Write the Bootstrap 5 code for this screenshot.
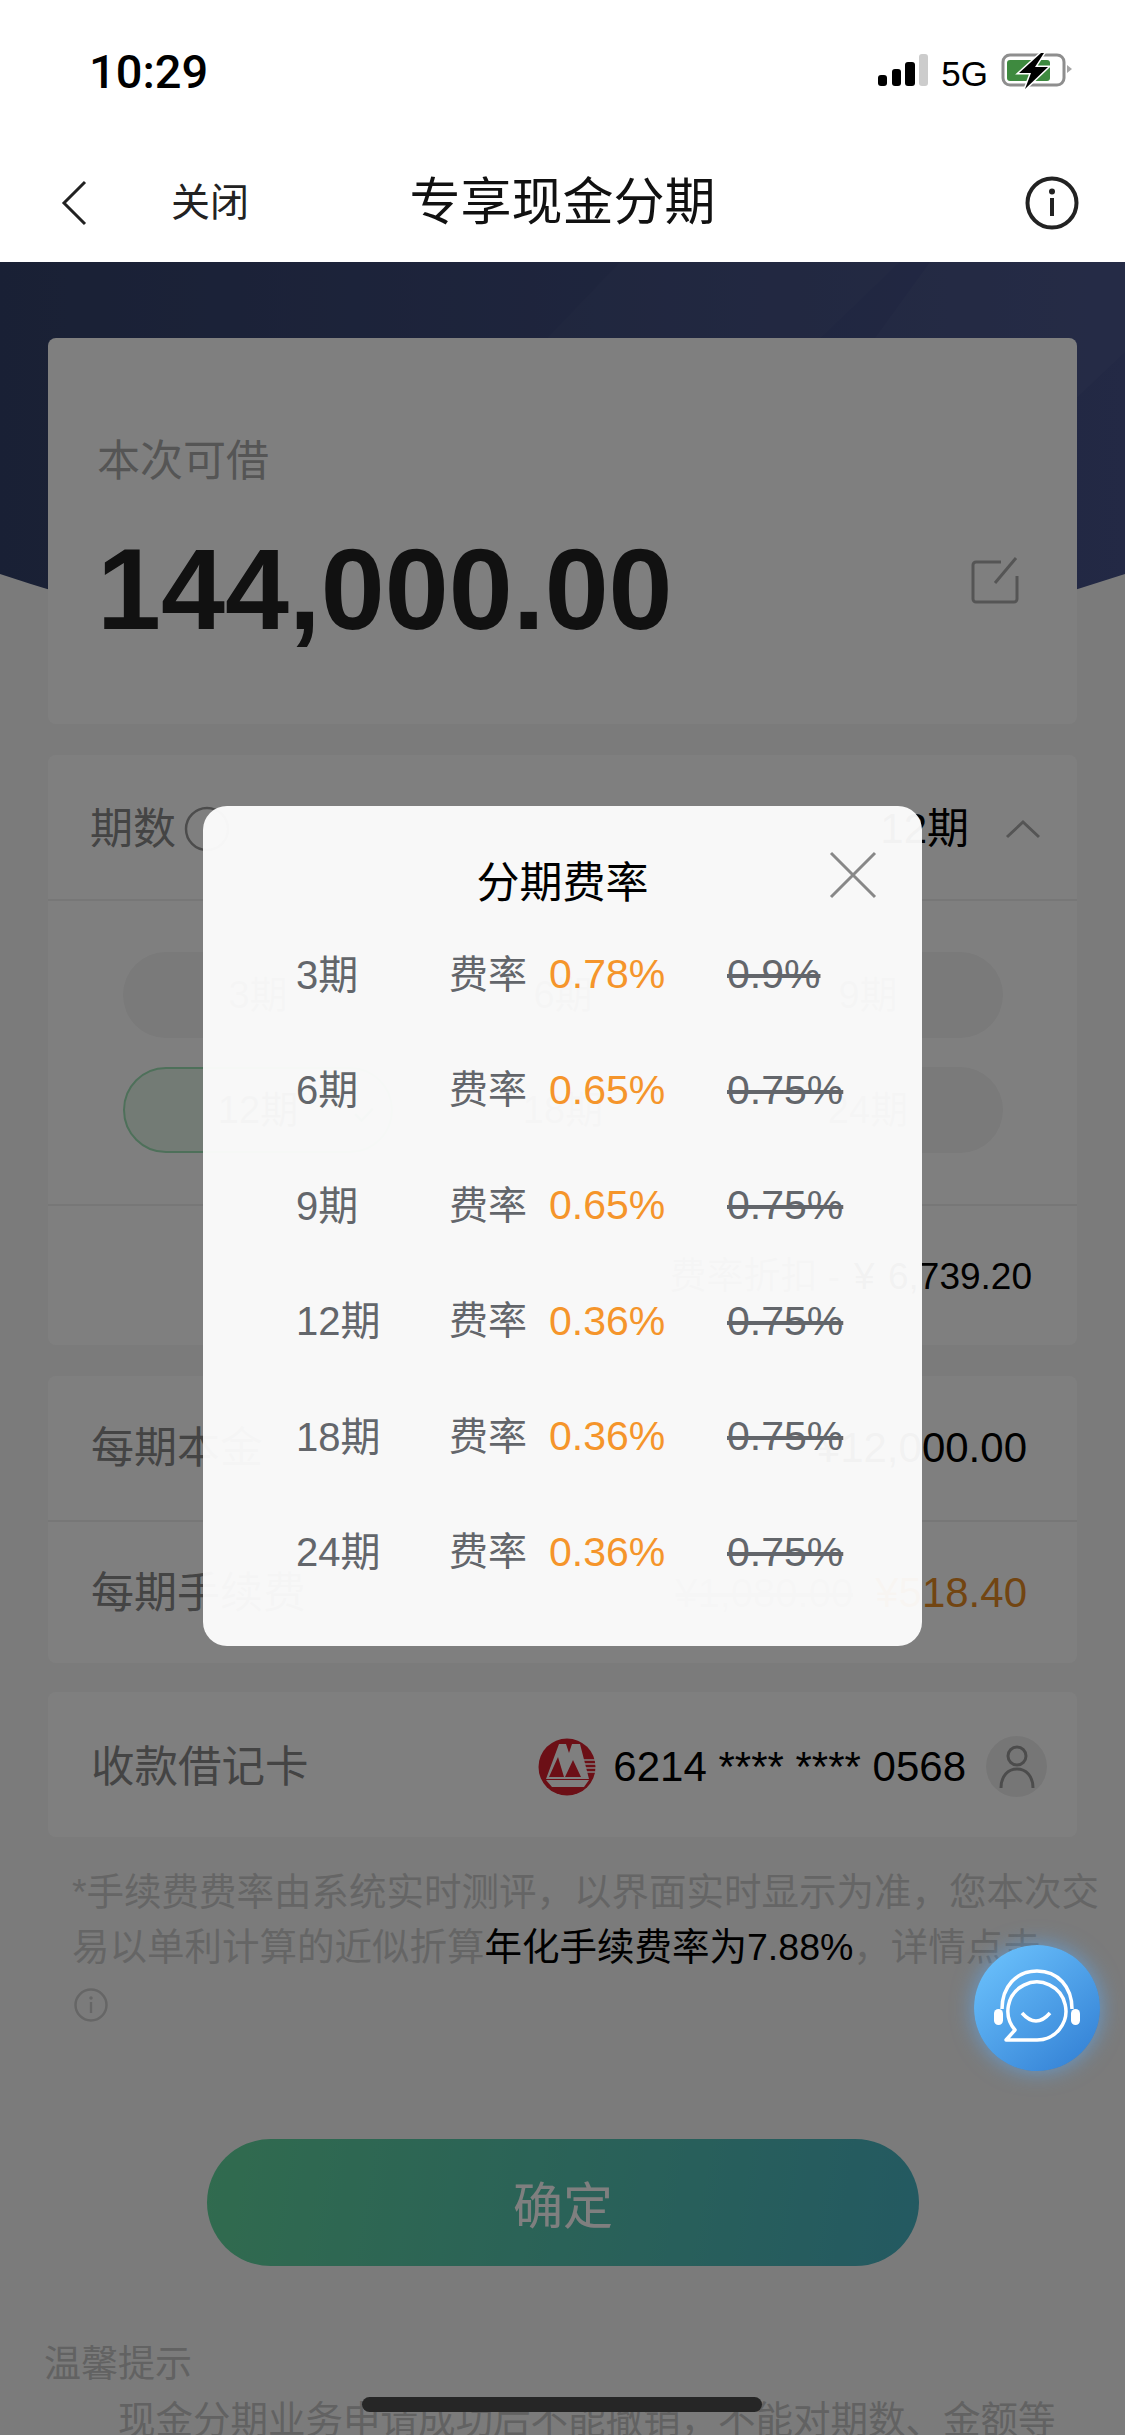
<!DOCTYPE html>
<html lang="zh">
  <head>
    <meta charset="UTF-8" />
    <meta name="viewport" content="width=device-width, initial-scale=1.0" />
    <title>专享现金分期</title>
    <link href="https://cdn.jsdelivr.net/npm/bootstrap@5.3.0/dist/css/bootstrap.min.css" rel="stylesheet" />
    <style>
      body {
        height: 2435px;
        overflow: hidden;
        font-family: "Liberation Sans", "Noto Sans CJK SC", sans-serif;
        background: #fff;
        color: #000;
      }
      .status-bar { height: 100px; padding: 0 52px 0 89px; }
      .status-time { font-family: Roboto, sans-serif; font-weight: 500; font-size: 47px; line-height: 1; padding-top: 48px; }
      .status-icons { padding-top: 34px; gap: 13px; }
      .status-5g { font-size: 35px; line-height: 1; padding-top: 22px; }
      .top-nav { height: 162px; padding: 44px 46px 0 61px; }
      .nav-close { font-size: 39px; line-height: 50px; margin-left: 84px; color: #222; }
      .nav-title { left: 0; right: 0; top: 78px; font-size: 51px; line-height: 50px; color: #111; }

      .page-main { height: 2173px; background: #f7f7f7; padding: 76px 48px 0; overflow: hidden; }
      .hero-bg { left: 0; top: 0; width: 1125px; height: 500px; }
      .page-sections { z-index: 1; }
      .sheet { background: #fff; border-radius: 8px; }
      .borrow-sheet { height: 386px; padding: 95px 58px 0 49px; margin-bottom: 31px; }
      .borrow-label { font-size: 43px; line-height: 56px; color: #ababab; }
      .borrow-amount { font-size: 115px; line-height: 114px; font-weight: 700; color: #222; margin-top: 43px; }
      .edit-icon { margin-top: 124px; }

      .term-sheet { height: 590px; margin-bottom: 31px; }
      .term-head { height: 146px; padding: 3px 36px 0 42px; border-bottom: 2px solid #efefef; }
      .row-label { font-size: 43px; line-height: 56px; color: #888; }
      .row-value { font-size: 42px; line-height: 56px; color: #000; }
      .term-pills { padding: 51px 74px 51px 75px; gap: 29px 35px; border-bottom: 2px solid #efefef; }
      .term-pill { width: 270px; height: 86px; border-radius: 43px; background: #f4f4f4; font-size: 38px; color: #888; }
      .term-pill.picked { background: #e6f6ea; border: 2px solid #9ce0b4; color: #666; }
      .pick-check { left: 228px; top: 38px; }
      .discount-row { height: 142px; padding: 0 45px 0 42px; font-size: 37px; color: #888; }
      .discount-row b { font-weight: 400; color: #000; margin-left: 14px; word-spacing: 3px; }

      .fee-sheet { height: 287px; margin-bottom: 29px; }
      .fee-row { height: 144px; padding: 0 50px 0 43px; }
      .fee-row + .fee-row { height: 143px; border-top: 2px solid #efefef; }
      .old-fee { font-size: 40px; color: #aaa; text-decoration: line-through; margin-right: 22px; }
      .fee-now { color: #e58a25; }

      .card-sheet { height: 145px; padding: 4px 30px 0 43px; }
      .card-sheet .row-label { font-size: 43.5px; }
      .bank-num { font-size: 42px; line-height: 56px; margin-left: 17px; margin-right: 20px; }
      .person-dot { width: 61px; height: 61px; border-radius: 50%; background: #ededed; }

      .foot-note { margin: 28px 0 0 24px; width: 1040px; font-size: 37.5px; line-height: 55px; color: #cbcbcb; }
      .foot-note strong { font-weight: 400; color: #000; }
      .foot-note svg { display: block; margin: 13px 0 0 2px; }
      .confirm-btn {
        display: block;
        width: 712px;
        height: 127px;
        margin: 117px 0 0 159px;
        padding-top: 10px;
        border: 0;
        border-radius: 64px;
        background: linear-gradient(100deg, #62d69d, #48b3c3);
        color: #fff;
        font-size: 50px;
      }
      .tips-head { margin: 74px 0 0 -4px; font-size: 37px; line-height: 50px; color: #c4c4c4; }
      .tips-body { margin: 5px 0 0 70px; width: 960px; font-size: 37.5px; line-height: 50px; color: #c4c4c4; white-space: nowrap; }

      .dim-layer { inset: 0; background: rgba(0, 0, 0, .5); z-index: 2; }
      .rate-modal {
        left: 203px;
        top: 544px;
        width: 719px;
        height: 840px;
        z-index: 3;
        border-radius: 24px;
        background: rgba(255, 255, 255, .95);
        padding-top: 52px;
      }
      .rate-title { font-size: 43px; line-height: 50px; margin-bottom: 9px; }
      .rate-close { right: 44px; top: 44px; }
      .rate-row { height: 115.5px; padding-left: 93px; font-size: 41px; color: #63666b; }
      .rate-term { width: 153px; font-size: 40px; }
      .rate-word { width: 100px; font-size: 39px; }
      .rate-now { width: 178px; color: #f5952b; }
      .chat-bubble {
        left: 974px;
        top: 1683px;
        width: 126px;
        height: 126px;
        z-index: 4;
        border-radius: 50%;
        background: linear-gradient(140deg, #6fc6ff, #2f7cd2);
        box-shadow: 0 0 22px rgba(90, 175, 255, .65);
      }
      .home-bar { left: 362px; top: 2135px; width: 400px; height: 15px; border-radius: 8px; background: #262626; z-index: 4; }
    </style>
  </head>
  <body>
    <div class="status-bar d-flex justify-content-between">
      <div class="status-time">10:29</div>
      <div class="status-icons d-flex align-items-start">
        <svg width="50" height="60" viewBox="0 0 50 60">
          <rect x="0" y="41" width="9" height="11" rx="3" fill="#000" />
          <rect x="14" y="35" width="9" height="17" rx="3" fill="#000" />
          <rect x="27" y="28" width="10" height="24" rx="3" fill="#000" />
          <rect x="41" y="20" width="9" height="32" rx="3" fill="#ccc" />
        </svg>
        <div class="status-5g">5G</div>
        <svg width="72" height="60" viewBox="0 0 72 60">
          <rect x="2" y="21" width="61" height="30" rx="7" fill="none" stroke="#8e8e8e" stroke-width="3" />
          <rect x="6" y="26" width="43" height="21" rx="3" fill="#3e8a3f" />
          <path d="M66 31l5 4-5 4z" fill="#a5a5a5" />
          <path d="M40 19L18 39h12l-6 16 23-22H34l9-14z" fill="#000" stroke="#fff" stroke-width="3" paint-order="stroke" />
        </svg>
      </div>
    </div>

    <div class="top-nav position-relative d-flex align-items-center">
      <svg width="26" height="46" viewBox="0 0 26 46"><path d="M24 2L3 23l21 21" fill="none" stroke="#222" stroke-width="3" /></svg>
      <div class="nav-close">关闭</div>
      <div class="nav-title position-absolute text-center">专享现金分期</div>
      <svg class="ms-auto" width="54" height="54" viewBox="0 0 54 54">
        <circle cx="27" cy="27" r="24.5" fill="none" stroke="#222" stroke-width="4" />
        <circle cx="27" cy="15.5" r="3" fill="#222" />
        <rect x="25" y="22" width="4" height="18" fill="#222" />
      </svg>
    </div>

    <div class="page-main position-relative">
      <svg class="hero-bg position-absolute" viewBox="0 0 1125 500">
        <defs>
          <linearGradient id="heroFill" x1="0" y1="0" x2="1" y2="0">
            <stop offset="0" stop-color="#33416a" />
            <stop offset="1" stop-color="#46528a" />
          </linearGradient>
        </defs>
        <path d="M0 0H1125V312Q562 500 0 312Z" fill="url(#heroFill)" />
        <path d="M620 0H900L660 230H400Z" fill="#fff" opacity=".025" />
        <path d="M930 0H1125V90L1030 180H800Z" fill="#fff" opacity=".03" />
      </svg>

      <div class="page-sections position-relative">
        <div class="sheet borrow-sheet d-flex justify-content-between">
          <div>
            <div class="borrow-label">本次可借</div>
            <div class="borrow-amount">144,000.00</div>
          </div>
          <svg class="edit-icon" width="48" height="48" viewBox="0 0 48 48">
            <path d="M30 6H5a3 3 0 0 0-3 3v34a3 3 0 0 0 3 3h38a3 3 0 0 0 3-3V20" fill="none" stroke="#aaa" stroke-width="3" transform="translate(0 -1)" />
            <path d="M24 26L45 1" fill="none" stroke="#aaa" stroke-width="3" />
          </svg>
        </div>

        <div class="sheet term-sheet">
          <div class="term-head d-flex align-items-center">
            <span class="row-label">期数</span>
            <svg class="ms-2" width="46" height="46" viewBox="0 0 46 46"><circle cx="23" cy="23" r="21" fill="none" stroke="#999" stroke-width="2.5" /></svg>
            <span class="row-value ms-auto">12期</span>
            <svg style="margin-left:36px" width="36" height="20" viewBox="0 0 36 20"><path d="M2 18L18 3l16 15" fill="none" stroke="#aaa" stroke-width="3" /></svg>
          </div>
          <div class="term-pills d-flex flex-wrap">
            <div class="term-pill d-flex align-items-center justify-content-center">3期</div>
            <div class="term-pill d-flex align-items-center justify-content-center">6期</div>
            <div class="term-pill d-flex align-items-center justify-content-center">9期</div>
            <div class="term-pill picked position-relative d-flex align-items-center justify-content-center">12期
              <svg class="pick-check position-absolute" width="22" height="16" viewBox="0 0 26 20"><path d="M2 9l8 8L24 2" fill="none" stroke="#7fcf9c" stroke-width="3" /></svg>
            </div>
            <div class="term-pill d-flex align-items-center justify-content-center">18期</div>
            <div class="term-pill d-flex align-items-center justify-content-center">24期</div>
          </div>
          <div class="discount-row d-flex align-items-center justify-content-end">费率折扣 -<b>¥ 6,739.20</b></div>
        </div>

        <div class="sheet fee-sheet">
          <div class="fee-row d-flex align-items-center justify-content-between">
            <span class="row-label">每期本金</span>
            <span class="row-value">¥12,000.00</span>
          </div>
          <div class="fee-row d-flex align-items-center justify-content-between">
            <span class="row-label">每期手续费</span>
            <span class="d-flex align-items-center"><span class="old-fee">¥1,080.00</span><span class="row-value fee-now">¥518.40</span></span>
          </div>
        </div>

        <div class="sheet card-sheet d-flex align-items-center">
          <span class="row-label me-auto">收款借记卡</span>
          <svg width="58" height="58" viewBox="0 0 58 58">
            <circle cx="29" cy="29" r="28.5" fill="#d81e2c" />
            <path d="M8 41L21 6h7l3 9 3-9h8l9 35z" fill="#fff" />
            <path d="M11 39l9-20 6 20zM27 39l8-17 8 17z" fill="#d81e2c" />
            <path d="M8 42h43l-5 7H14z" fill="#fff" />
            <path d="M44 22h13M45 26h13M46 30h12M47 34h10" stroke="#fff" stroke-width="1.5" />
          </svg>
          <span class="bank-num">6214 **** **** 0568</span>
          <span class="person-dot d-flex align-items-center justify-content-center">
            <svg width="36" height="44" viewBox="0 0 36 44">
              <circle cx="18" cy="11" r="9" fill="none" stroke="#999" stroke-width="3" />
              <path d="M2 43c0-12 7-19 16-19s16 7 16 19" fill="none" stroke="#999" stroke-width="3" />
            </svg>
          </span>
        </div>

        <div class="foot-note">
          *手续费费率由系统实时测评，以界面实时显示为准，您本次交易以单利计算的近似折算<strong>年化手续费率为7.88%</strong>，详情点击
          <svg width="34" height="34" viewBox="0 0 34 34">
            <circle cx="17" cy="17" r="15.5" fill="none" stroke="#ccc" stroke-width="2.5" />
            <circle cx="17" cy="10" r="1.8" fill="#ccc" />
            <rect x="15.8" y="14" width="2.4" height="11" fill="#ccc" />
          </svg>
        </div>

        <button type="button" class="confirm-btn">确定</button>

        <div class="tips-head">温馨提示</div>
        <div class="tips-body">现金分期业务申请成功后不能撤销，不能对期数、金额等</div>
      </div>

      <div class="dim-layer position-absolute"></div>

      <div class="rate-modal position-absolute">
        <div class="rate-title text-center">分期费率</div>
        <svg class="rate-close position-absolute" width="50" height="50" viewBox="0 0 50 50">
          <path d="M3 3l44 44M47 3L3 47" stroke="#888" stroke-width="3" />
        </svg>
        <div class="rate-row d-flex align-items-center"><span class="rate-term">3期</span><span class="rate-word">费率</span><span class="rate-now">0.78%</span><span class="text-decoration-line-through">0.9%</span></div>
        <div class="rate-row d-flex align-items-center"><span class="rate-term">6期</span><span class="rate-word">费率</span><span class="rate-now">0.65%</span><span class="text-decoration-line-through">0.75%</span></div>
        <div class="rate-row d-flex align-items-center"><span class="rate-term">9期</span><span class="rate-word">费率</span><span class="rate-now">0.65%</span><span class="text-decoration-line-through">0.75%</span></div>
        <div class="rate-row d-flex align-items-center"><span class="rate-term">12期</span><span class="rate-word">费率</span><span class="rate-now">0.36%</span><span class="text-decoration-line-through">0.75%</span></div>
        <div class="rate-row d-flex align-items-center"><span class="rate-term">18期</span><span class="rate-word">费率</span><span class="rate-now">0.36%</span><span class="text-decoration-line-through">0.75%</span></div>
        <div class="rate-row d-flex align-items-center"><span class="rate-term">24期</span><span class="rate-word">费率</span><span class="rate-now">0.36%</span><span class="text-decoration-line-through">0.75%</span></div>
      </div>

      <div class="chat-bubble position-absolute">
        <svg width="126" height="126" viewBox="0 0 126 126" fill="none" stroke="#fff" stroke-width="3.5">
          <path d="M28 64C28 42 42 26 63 26s35 16 35 38" />
          <rect x="20" y="64" width="9" height="16" rx="4.5" fill="#fff" stroke="none" />
          <rect x="97" y="64" width="9" height="16" rx="4.5" fill="#fff" stroke="none" />
          <path d="M41 85A29 29 0 1 1 62 95H32z" stroke-linejoin="round" />
          <path d="M48 68Q62 84 76 68" />
        </svg>
      </div>

      <div class="home-bar position-absolute"></div>
    </div>

    <script src="https://cdn.jsdelivr.net/npm/bootstrap@5.3.0/dist/js/bootstrap.bundle.min.js"></script>
  </body>
</html>
